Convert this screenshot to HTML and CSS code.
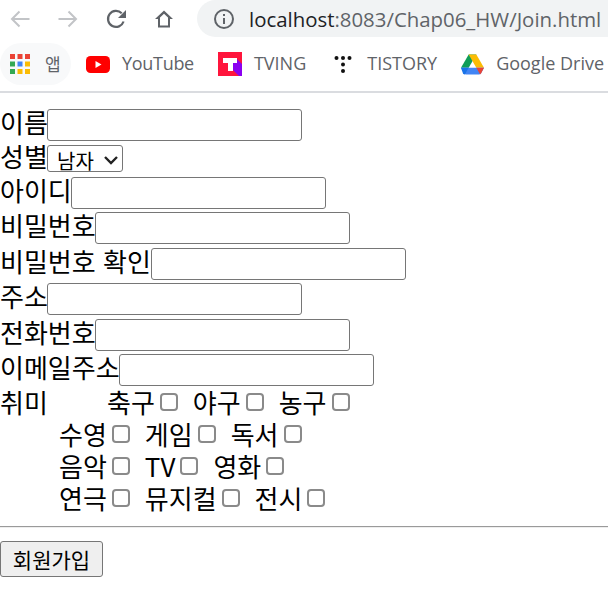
FILE: index.html
```html
<!DOCTYPE html>
<html lang="ko">
  <head>
    <meta charset="UTF-8">
    <title>Join</title>
    <link rel="stylesheet" href="styles.css">
  </head>
  <body>
    <header class="chrome">
      <div class="toolbar">
        <svg class="nav-icon" viewBox="0 0 20 20"><path d="M19.500 10H2M9.500 2.500 2 10l7.500 7.500" fill="none" stroke="#c2c4c7" stroke-width="2"/></svg>
        <svg class="nav-icon" viewBox="0 0 20 20"><path d="M.5 10H18M10.500 2.500 18 10l-7.500 7.500" fill="none" stroke="#c2c4c7" stroke-width="2"/></svg>
        <svg class="nav-icon" viewBox="0 0 20 20"><path d="M17.600 12.500A8 8 0 1 1 15.700 4.300" fill="none" stroke="#5f6368" stroke-width="2.200"/><path d="M20 1v8h-8z" fill="#5f6368"/></svg>
        <svg class="nav-icon" viewBox="0 0 20 20"><path d="M10 1.500 1 10h3v8.500h12V10h3zM6 16.500V8.500l4-3.700 4 3.700v8z" fill="#5f6368" fill-rule="evenodd"/></svg>
        <div class="address">
          <svg class="info-icon" viewBox="0 0 20 20"><circle cx="10" cy="10" r="9" fill="none" stroke="#5f6368" stroke-width="2"/><path d="M9 9h2v6H9zM9 5h2v2H9z" fill="#5f6368"/></svg>
          <span class="url"><span class="host">localhost</span>:8083/Chap06_HW/Join.html</span>
        </div>
      </div>
      <nav class="bookmarks">
        <a class="bookmark apps">
          <svg class="apps-icon" viewBox="0 0 20 20">
            <path d="M0 0h5v5H0z" fill="#ea4335"/><path d="M7.500 0h5v5h-5z" fill="#ea4335"/><path d="M15 0h5v5h-5z" fill="#ea4335"/>
            <path d="M0 7.500h5v5H0z" fill="#34a853"/><path d="M7.500 7.500h5v5h-5z" fill="#4285f4"/><path d="M15 7.500h5v5h-5z" fill="#fbbc04"/>
            <path d="M0 15h5v5H0z" fill="#34a853"/><path d="M7.500 15h5v5h-5z" fill="#fbbc04"/><path d="M15 15h5v5h-5z" fill="#fbbc04"/>
          </svg>
          <span>앱</span>
        </a>
        <a class="bookmark youtube">
          <svg viewBox="0 0 24 17"><rect width="24" height="17" rx="4.500" fill="#f00"/><path d="M9.500 5v7l6-3.500z" fill="#fff"/></svg>
          <span>YouTube</span>
        </a>
        <a class="bookmark tving">
          <svg viewBox="0 0 24 24"><path d="M0 0h24v24H0z" fill="#ff153c"/><path d="M8 9h4v9h3l6 6h3V12l-6-6z" fill="#8a00f0"/><path d="M5 6h14v5h-4v8H10v-8H5z" fill="#fff"/></svg>
          <span>TVING</span>
        </a>
        <a class="bookmark tistory">
          <svg viewBox="0 0 18 18"><circle cx="2.500" cy="3" r="2" fill="#111"/><circle cx="9" cy="3" r="2" fill="#111"/><circle cx="15.500" cy="3" r="2" fill="#111"/><circle cx="9" cy="9.500" r="2" fill="#111"/><circle cx="9" cy="16" r="2" fill="#111"/></svg>
          <span>TISTORY</span>
        </a>
        <a class="bookmark drive">
          <svg viewBox="0 0 24 21"><path d="M8 0h8L8 14H0z" fill="#0f9d58"/><path d="M8 0h8l8 14h-8z" fill="#fbbc04"/><path d="M4 14h20l-3 5.500q-.8 1.500-2.500 1.500h-13q-1.500 0-2.500-1.500L0 14z" fill="#4285f4"/><path d="M16 14h8l-3 5.500q-.8 1.500-2.500 1.500H20z" fill="#ea4335"/><path d="M0 14h8l-4 7q-1 0-2-1.500z" fill="#1a73e8"/></svg>
          <span>Google Drive</span>
        </a>
      </nav>
    </header>

    <form class="join">
      <div class="field name"><label>이름</label><input type="text"></div>
      <div class="field gender"><label>성별</label><select><option>남자</option></select></div>
      <div class="field userid"><label>아이디</label><input type="text"></div>
      <div class="field pw"><label>비밀번호</label><input type="password"></div>
      <div class="field pw2"><label>비밀번호 확인</label><input type="password"></div>
      <div class="field addr"><label>주소</label><input type="text"></div>
      <div class="field tel"><label>전화번호</label><input type="text"></div>
      <div class="field email"><label>이메일주소</label><input type="text"></div>

      <div class="hobbies">
        <div class="hobby-row first">
          <span class="hobby-title">취미</span>
          <label>축구<input type="checkbox"></label>
          <label>야구<input type="checkbox"></label>
          <label>농구<input type="checkbox"></label>
        </div>
        <div class="hobby-row">
          <label>수영<input type="checkbox"></label>
          <label>게임<input type="checkbox"></label>
          <label>독서<input type="checkbox"></label>
        </div>
        <div class="hobby-row">
          <label>음악<input type="checkbox"></label>
          <label>TV<input type="checkbox"></label>
          <label>영화<input type="checkbox"></label>
        </div>
        <div class="hobby-row">
          <label>연극<input type="checkbox"></label>
          <label>뮤지컬<input type="checkbox"></label>
          <label>전시<input type="checkbox"></label>
        </div>
      </div>

      <hr>
      <button type="button">회원가입</button>
    </form>
  </body>
</html>
```

FILE: styles.css
```css
html, body {
  margin: 0;
  height: 601px;
  overflow: hidden;
  background: #fff;
}
body {
  font-family: "Noto Sans CJK KR", "Liberation Sans", sans-serif;
  color: #000;
}

/* browser chrome */
.chrome {
  height: 91px;
  border-bottom: 2px solid #dadce0;
  overflow: hidden;
}
.toolbar {
  display: flex;
  align-items: center;
  height: 37px;
  padding-left: 10px;
  gap: 28px;
}
.nav-icon {
  width: 20px;
  height: 20px;
  flex: none;
}
.address {
  display: flex;
  align-items: center;
  flex: none;
  width: 440px;
  height: 37px;
  margin-left: -5px;
  padding-left: 17px;
  gap: 15px;
  background: #f1f3f4;
  border-radius: 19px;
}
.info-icon {
  width: 20px;
  height: 20px;
  flex: none;
}
.url {
  font-family: "Open Sans", "Liberation Sans", sans-serif;
  font-size: 20.400px;
  color: #5f6368;
  white-space: nowrap;
}
.host {
  color: #202124;
}
.bookmarks {
  display: flex;
  align-items: center;
  height: 42px;
  margin-top: 6px;
  white-space: nowrap;
}
.bookmark {
  display: flex;
  align-items: center;
  flex: none;
  font-family: "Open Sans", "Noto Sans CJK KR", sans-serif;
  font-size: 18px;
  color: #5f6368;
}
.bookmark span {
  margin-bottom: 2px;
}
.apps {
  width: 61px;
  height: 42px;
  padding-left: 10px;
  gap: 15px;
  font-size: 17px;
  background: #f8f9fa;
  border-radius: 21px;
}
.apps-icon {
  width: 20px;
  height: 20px;
}
.youtube {
  margin-left: 15px;
  gap: 12px;
  letter-spacing: -0.3px;
}
.youtube svg {
  width: 24px;
  height: 17px;
}
.tving {
  margin-left: 24px;
  gap: 12px;
}
.tving svg {
  width: 24px;
  height: 24px;
}
.tistory {
  margin-left: 28px;
  gap: 15px;
}
.tistory svg {
  width: 18px;
  height: 18px;
}
.drive {
  margin-left: 24px;
  gap: 12px;
}
.drive svg {
  width: 23px;
  height: 21px;
}

/* join form */
.join {
  padding-top: 14px;
  font-size: 26px;
  line-height: 32px;
}
.field {
  display: flex;
  align-items: center;
  height: 35.500px;
}
.field.gender {
  height: 32.500px;
}
.field label {
  margin-bottom: 6px;
  white-space: nowrap;
}
.field input {
  box-sizing: border-box;
  width: 255px;
  height: 32px;
  margin: 0;
  padding: 1px 2px;
  border: 1px solid #767676;
  border-radius: 3px;
  background: #fff;
}
.field select {
  box-sizing: border-box;
  appearance: none;
  width: 76px;
  height: 27px;
  margin: 0;
  padding: 0 0 0 9px;
  font-family: "Noto Sans CJK KR", sans-serif;
  font-size: 20px;
  color: #000;
  background: #fff url("data:image/svg+xml,%3Csvg xmlns='http://www.w3.org/2000/svg' width='16' height='10'%3E%3Cpath d='M2 2l6 6 6-6' fill='none' stroke='%23222' stroke-width='2.400'/%3E%3C/svg%3E") no-repeat 55px 9px;
  border: 1px solid #767676;
  border-radius: 3px;
}
.name label, .gender label, .addr label { width: 47px; }
.userid label { width: 71px; }
.pw label, .tel label { width: 95px; }
.email label { width: 119px; }
.pw2 label { width: 151px; }

.hobbies {
  margin-top: -2px;
}
.hobby-row {
  display: flex;
  align-items: center;
  gap: 15px;
  height: 32px;
  padding-left: 59px;
}
.hobby-row.first {
  padding-left: 0;
}
.hobby-title {
  width: 92px;
}
.hobby-row label {
  display: flex;
  align-items: center;
  white-space: nowrap;
}
.hobby-row input {
  box-sizing: border-box;
  appearance: none;
  width: 18px;
  height: 18px;
  margin: 0 0 0 5px;
  background: #fff;
  border: 2px solid #8a8a8a;
  border-radius: 4px;
}
hr {
  margin: 12px 0 13px;
  border: 0;
  border-top: 1px solid #9a9a9a;
  border-bottom: 1px solid #eee;
}
button {
  display: block;
  box-sizing: border-box;
  width: 103px;
  height: 36px;
  padding: 0;
  font-family: "Noto Sans CJK KR", sans-serif;
  font-size: 21px;
  color: #000;
  background: #efefef;
  border: 1px solid #767676;
  border-radius: 3px;
}
```
